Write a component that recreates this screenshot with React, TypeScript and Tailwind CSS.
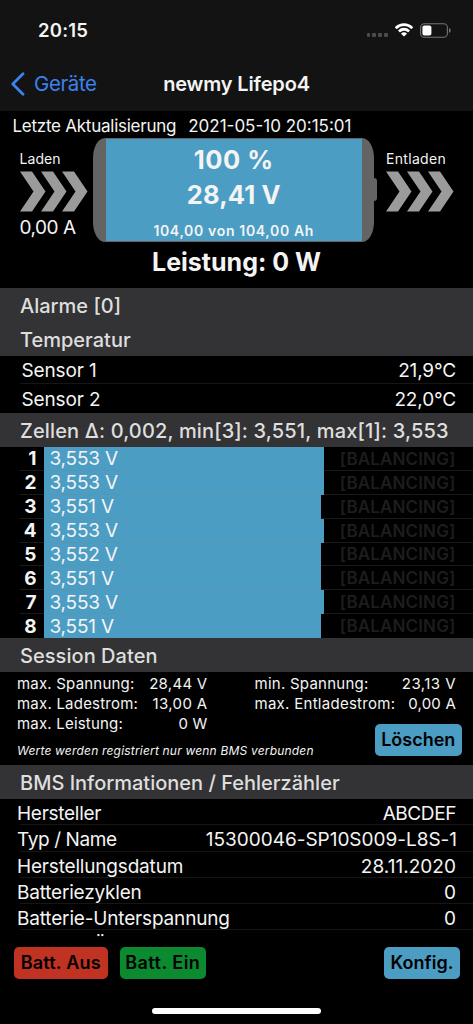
// src/App.tsx
import React from "react";

const CELLS = [
  { id: 1, volt: "3,553 V", width: 280 },
  { id: 2, volt: "3,553 V", width: 280 },
  { id: 3, volt: "3,551 V", width: 277 },
  { id: 4, volt: "3,553 V", width: 280 },
  { id: 5, volt: "3,552 V", width: 277 },
  { id: 6, volt: "3,551 V", width: 277 },
  { id: 7, volt: "3,553 V", width: 280 },
  { id: 8, volt: "3,551 V", width: 277 },
];

const INFO = [
  { label: "Hersteller", value: "ABCDEF", ls: "tracking-[-0.28px]", vs: "tracking-[-0.4px]" },
  { label: "Typ / Name", value: "15300046-SP10S009-L8S-1", ls: "tracking-[-0.4px]", vs: "tracking-[-0.02px] -mr-[1px]" },
  { label: "Herstellungsdatum", value: "28.11.2020", ls: "tracking-[-0.18px]", vs: "tracking-[0.04px]" },
  { label: "Batteriezyklen", value: "0", ls: "tracking-[-0.2px]", vs: "" },
  { label: "Batterie-Unterspannung", value: "0", ls: "tracking-[-0.17px]", vs: "" },
];

function StatusBar() {
  return (
    <div className="flex h-[60px] items-center justify-between pl-[38px] pr-[22px]">
      <span className="text-[18.5px] font-semibold leading-none tracking-[0.2px]">20:15</span>
      <div className="flex items-center">
        <div className="mr-[6.5px] mt-[10px] flex gap-[2.2px]">
          <i className="h-[3.5px] w-[3.6px] rounded-[1px] bg-[#4c4c4c]" />
          <i className="h-[3.5px] w-[3.6px] rounded-[1px] bg-[#4c4c4c]" />
          <i className="h-[3.5px] w-[3.6px] rounded-[1px] bg-[#4c4c4c]" />
          <i className="h-[3.5px] w-[3.6px] rounded-[1px] bg-[#4c4c4c]" />
        </div>
        <svg width="20" height="15" viewBox="0 0 20 15" className="mr-[6px]" fill="#fff">
          <path d="M10 3.1c2.7 0 5.200 1.050 7.050 2.850.15.140.380.140.520 0l1.400-1.400a.4.4 0 0 0 0-.57A12.9 12.900 0 0 0 1.030 3.980a.4.4 0 0 0 0 .57l1.400 1.400c.14.140.370.140.520 0A10.100 10.100 0 0 1 10 3.100Z" />
          <path d="M10 7.650c1.450 0 2.800.55 3.850 1.500.15.140.390.140.530-.01l1.400-1.420a.4.4 0 0 0 0-.57 8.400 8.400 0 0 0-11.560 0 .4.4 0 0 0 0 .57l1.400 1.420c.14.150.380.150.530.01A5.700 5.700 0 0 1 10 7.650Z" />
          <path d="M12.700 10.900a.4.4 0 0 0-.01-.58 4.100 4.100 0 0 0-5.380 0 .4.4 0 0 0-.01.58l2.420 2.450a.4.4 0 0 0 .56 0l2.420-2.450Z" />
        </svg>
        <svg width="31" height="15" viewBox="0 0 31 15">
          <rect x="0.600" y="0.700" width="26.800" height="13.600" rx="3.800" fill="none" stroke="#747474" strokeWidth="1.100" />
          <rect x="2.400" y="2.500" width="9" height="10" rx="2" fill="#fff" />
          <path d="M29 5v5c1-.4 1.700-1.400 1.700-2.500S30 5.400 29 5Z" fill="#747474" />
        </svg>
      </div>
    </div>
  );
}

function NavBar() {
  return (
    <div className="relative flex h-[51px] items-center justify-center pb-[3px]">
      <div className="absolute left-[11px] top-0 flex h-[48px] items-center text-[#3b82f0]">
        <svg width="14" height="24" viewBox="0 0 14 24" className="mr-[9px]">
          <path d="M12 1.800 1.800 12 12 22.200" fill="none" stroke="currentColor" strokeWidth="2.800" strokeLinecap="round" strokeLinejoin="round" />
        </svg>
        <span className="text-[20.5px] leading-none tracking-[-0.4px]">Geräte</span>
      </div>
      <span className="text-[20px] font-semibold leading-none tracking-[-0.15px]">newmy Lifepo4</span>
    </div>
  );
}

function Chevrons() {
  return (
    <svg width="68" height="41" viewBox="0 0 68 41" fill="#9b9b9b">
      <path d="M0 0.500h12l13.500 20-13.500 20H0l13.500-20Z" />
      <path d="M21 0.500h12l13.500 20-13.500 20H21l13.500-20Z" />
      <path d="M42 0.500h12l13.500 20-13.500 20H42l13.500-20Z" />
    </svg>
  );
}

function BatteryPanel() {
  return (
    <div className="h-[176.5px]">
      <div className="flex h-[27px] items-center gap-[12px] pl-[12.500px] pt-[3px] text-[17px] leading-none">
        <span className="tracking-[-0.25px]">Letzte Aktualisierung</span>
        <span>2021-05-10 20:15:01</span>
      </div>
      <div className="flex h-[104px]">
        <div className="w-[93px] shrink-0 pl-[19.500px] pt-[14px]">
          <div className="text-[14px] leading-[14px] tracking-[0.07px]">Laden</div>
          <div className="mt-[5px] h-[41px]">
            <Chevrons />
          </div>
          <div className="mt-[6px] whitespace-nowrap text-[19px] leading-[19px] tracking-[-0.46px]">0,00 A</div>
        </div>
        <div className="flex w-[281px] shrink-0 rounded-[12px/20px] bg-[#646464] pl-[13px] pr-[12.5px] pt-[1px] pb-[1px]">
          <div className="flex flex-1 flex-col items-center bg-[#4c9dc4] font-bold">
            <div className="mt-[8px] text-[25.500px] leading-[26px] tracking-[0.5px]">100 %</div>
            <div className="mt-[9px] text-[25.500px] leading-[26px] tracking-[0.15px]">28,41 V</div>
            <div className="mt-[15px] text-[14px] font-semibold leading-[16px] tracking-[0.66px]">104,00 von 104,00 Ah</div>
          </div>
        </div>
        <div className="mt-[40px] h-[23px] w-[3px] shrink-0 rounded-r-[3px] bg-[#646464]" />
        <div className="pl-[8.500px] pt-[14px]">
          <div className="pl-[0.500px] text-[14px] leading-[14px] tracking-[0.32px]">Entladen</div>
          <div className="mt-[5px] h-[41px]">
            <Chevrons />
          </div>
        </div>
      </div>
      <div className="pt-[7px] text-center text-[25px] font-bold leading-[26px]">Leistung: 0 W</div>
    </div>
  );
}

function SectionTitle({ children, className = "" }: { children: React.ReactNode; className?: string }) {
  return (
    <div className={`flex h-[34px] shrink-0 items-center whitespace-nowrap bg-[#333335] pl-[20px] pt-[2px] text-[20px] font-medium leading-none text-[#dedede] ${className}`}>
      {children}
    </div>
  );
}

function Sensor({ name, value, line }: { name: string; value: string; line?: boolean }) {
  return (
    <div className="relative flex h-[28.750px] items-center justify-between pl-[21.500px] pr-[17px] pt-px text-[19px] leading-none">
      <span className="tracking-[-0.13px]">{name}</span>
      <span className="tracking-[-0.15px]">{value}</span>
      {line && <div className="absolute bottom-0 left-[20px] right-0 h-px bg-[#161616]" />}
    </div>
  );
}

function CellRow({ id, volt, width }: { id: number; volt: string; width: number }) {
  return (
    <div className="relative flex h-[23.875px] items-center leading-none">
      <div className="w-[44px] pr-[7.500px] text-right text-[19px] font-bold">{id}</div>
      <div className="flex h-full items-center bg-[#4c9dc4] pl-[5.500px] text-[19px] tracking-[-0.2px]" style={{ width }}>
        {volt}
      </div>
      <div className="ml-auto pr-[17.500px] pt-px text-[17px] font-semibold tracking-[0.13px] text-[#1d1d1d]">[BALANCING]</div>
      {id < 8 && <div className="absolute bottom-0 left-[20px] right-0 h-px bg-[#808080]/20" />}
    </div>
  );
}

function SessionData() {
  return (
    <div className="relative h-[93px] text-[15px] leading-[20px]">
      <div className="flex pt-[2px]">
        <div className="w-[207.500px] pl-[17px]">
          <div className="flex justify-between">
            <span className="tracking-[0.2px]">max. Spannung:</span>
            <span className="tracking-[0.28px]">28,44 V</span>
          </div>
          <div className="flex justify-between">
            <span className="tracking-[0.22px]">max. Ladestrom:</span>
            <span className="tracking-[0.35px]">13,00 A</span>
          </div>
          <div className="flex justify-between">
            <span className="tracking-[0.2px]">max. Leistung:</span>
            <span className="tracking-[0.2px]">0 W</span>
          </div>
        </div>
        <div className="ml-[47px] w-[201.500px]">
          <div className="flex justify-between">
            <span className="tracking-[0.25px]">min. Spannung:</span>
            <span className="tracking-[0.45px]">23,13 V</span>
          </div>
          <div className="flex justify-between">
            <span className="tracking-[0.28px]">max. Entladestrom:</span>
            <span className="tracking-[0.2px]">0,00 A</span>
          </div>
        </div>
      </div>
      <div className="pl-[17px] pt-[7px] text-[12px] italic tracking-[0.19px]">
        Werte werden registriert nur wenn BMS verbunden
      </div>
      <button className="absolute left-[375px] top-[52px] flex h-[32px] w-[86.500px] items-center justify-center rounded-[5px] bg-[#4c9dc4] text-[18px] font-semibold leading-none text-black">
        Löschen
      </button>
    </div>
  );
}

function ActionBar() {
  return (
    <div className="flex h-[87px] items-start bg-black pl-[14px] pr-[13px] pt-[10px] text-[18px] font-semibold leading-none text-black">
      <button className="h-[32px] w-[93.500px] rounded-[5px] bg-[#c03221] tracking-[0.22px]">Batt. Aus</button>
      <button className="ml-[12px] h-[32px] w-[86.500px] rounded-[5px] bg-[#0b8a2f] tracking-[0.47px]">Batt. Ein</button>
      <button className="ml-auto h-[32px] w-[76px] rounded-[5px] bg-[#4c9dc4] tracking-[0.05px]">Konfig.</button>
    </div>
  );
}

export default function App() {
  return (
    <div className="relative flex h-[1024px] w-[473px] flex-col overflow-hidden bg-black font-['Inter',sans-serif] text-[#f4f4f4]">
      <header className="h-[111px] shrink-0 bg-[#131313]">
        <StatusBar />
        <NavBar />
      </header>

      <BatteryPanel />

      <SectionTitle>Alarme [0]</SectionTitle>
      <SectionTitle>Temperatur</SectionTitle>
      <Sensor name="Sensor 1" value="21,9°C" line />
      <Sensor name="Sensor 2" value="22,0°C" />

      <SectionTitle className="tracking-[0.145px]">Zellen Δ: 0,002, min[3]: 3,551, max[1]: 3,553</SectionTitle>
      {CELLS.map((c) => (
        <CellRow key={c.id} {...c} />
      ))}

      <SectionTitle className="tracking-[0.05px]">Session Daten</SectionTitle>
      <SessionData />

      <SectionTitle>BMS Informationen / Fehlerzähler</SectionTitle>
      <div className="h-[138px] shrink-0 overflow-hidden">
        {INFO.map((row) => (
          <div key={row.label} className="relative flex h-[26.250px] items-center justify-between pl-[17px] pr-[17px] pt-[3px] text-[19px] leading-none">
            <span className={row.ls}>{row.label}</span>
            <span className={row.vs}>{row.value}</span>
            <div className="absolute bottom-0 left-[20px] right-0 h-px bg-[#161616]" />
          </div>
        ))}
        <div className="pl-[17px] pt-[6px] text-[19px] leading-[19px] tracking-[-0.17px]">Batterie-Überspannung</div>
      </div>

      <ActionBar />
      <div className="absolute bottom-[10px] left-[152px] h-[6px] w-[169px] rounded-full bg-white" />
    </div>
  );
}
